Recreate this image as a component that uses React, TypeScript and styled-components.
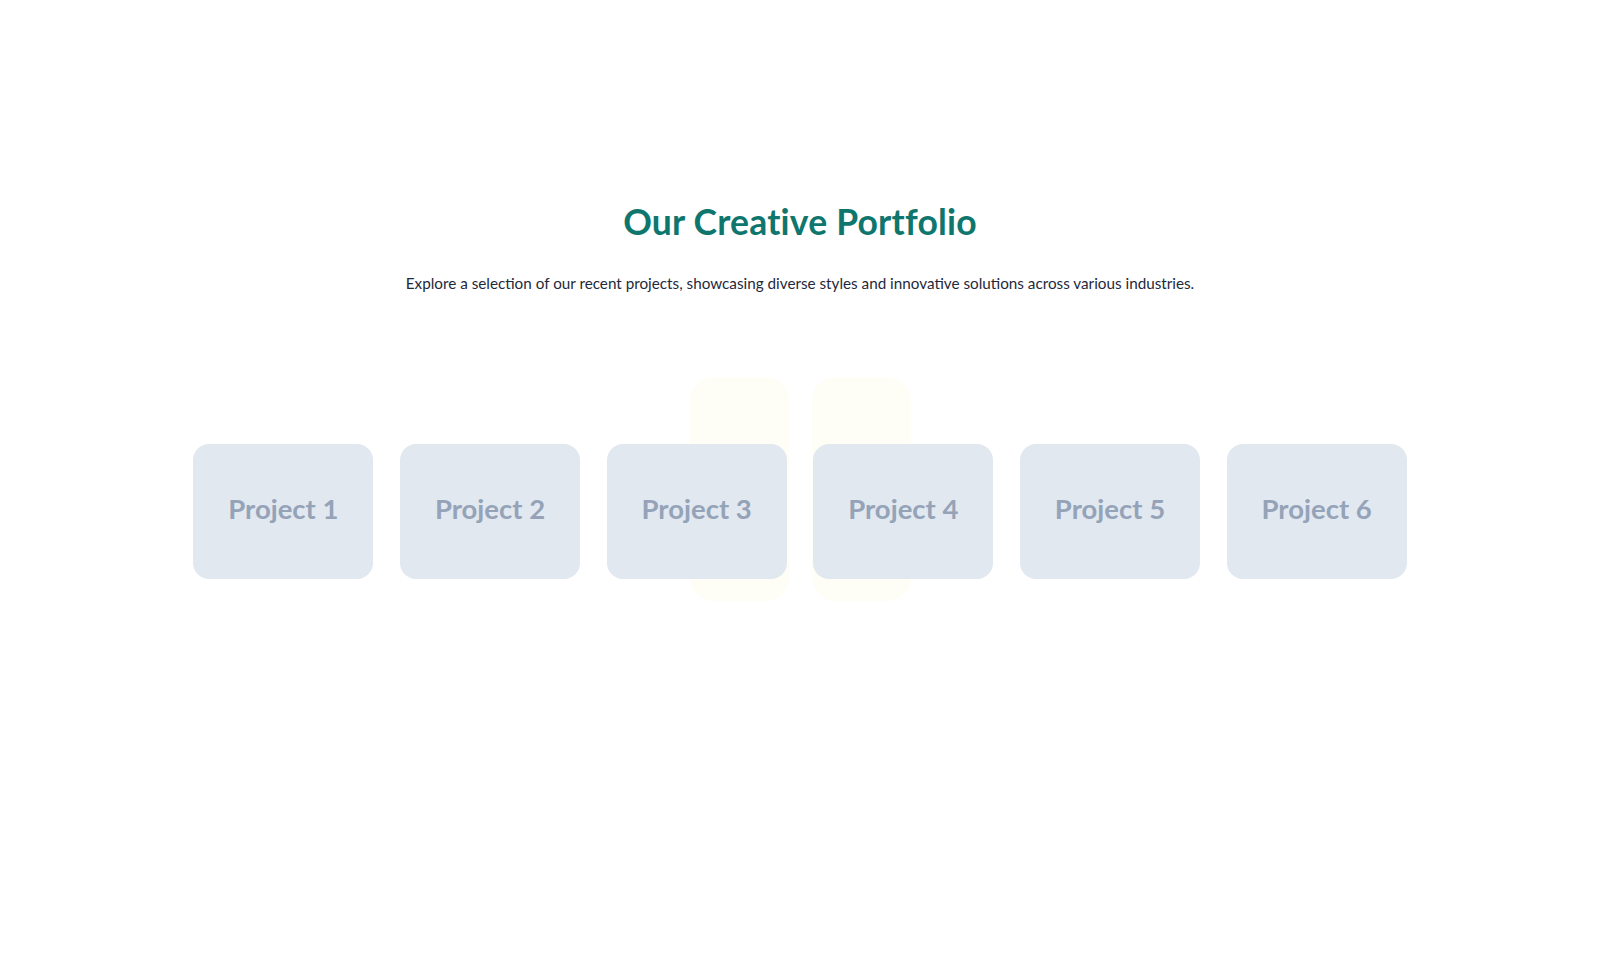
import React from 'react';
import styled, { createGlobalStyle } from 'styled-components';

// ------------------------------------------------------------------------------------------------

const GlobalStyle = createGlobalStyle`
  html, body {
    margin: 0;
    padding: 0;
    background: #ffffff;
  }
  body {
    font-family: Lato, 'Noto Sans', sans-serif;
    -webkit-font-smoothing: antialiased;
  }
`;

const projects = ['Project 1', 'Project 2', 'Project 3', 'Project 4', 'Project 5', 'Project 6'];

// offsets of the soft glow panels, relative to the gallery centre
const glows = [-110.5, 11.5];

export default function App() {
  return (
    <>
      <GlobalStyle />
      <Page>
        <Header>
          <Title>Our Creative Portfolio</Title>
          <Subtitle>
            Explore a selection of our recent projects, showcasing diverse styles and innovative solutions across
            various industries.
          </Subtitle>
        </Header>

        <Gallery>
          {glows.map((offset, i) => (
            <Glow key={i} style={{ left: `calc(50% + ${offset}px)` }} />
          ))}
          <CardRow>
            {projects.map(name => (
              <Card key={name}>
                <CardLabel>{name}</CardLabel>
              </Card>
            ))}
          </CardRow>
        </Gallery>
      </Page>
    </>
  );
}

// ------------------------------------------------------------------------------------------------

const Page = styled.main`
  width: 100%;
  min-height: 100vh;
  box-sizing: border-box;
  padding-top: 200px;
  display: flex;
  flex-direction: column;
  align-items: center;
`;

const Header = styled.header`
  display: flex;
  flex-direction: column;
  align-items: center;
  text-align: center;
`;

const Title = styled.h2`
  margin: 0;
  font-family: Lato, 'Noto Sans', sans-serif;
  font-weight: 700;
  font-size: 35.5px;
  line-height: 44px;
  color: #0f766e;
  letter-spacing: 0.2px;
`;

const Subtitle = styled.p`
  margin: 27px 0 0;
  font-family: Lato, 'Noto Sans', sans-serif;
  font-weight: 400;
  font-size: 15.25px;
  line-height: 24px;
  color: #1e293b;
`;

const Gallery = styled.section`
  position: relative;
  margin-top: 82px;
  width: 100%;
  height: 224px;
  display: flex;
  justify-content: center;
`;

const Glow = styled.div`
  position: absolute;
  top: 0;
  width: 99px;
  height: 224px;
  border-radius: 24px;
  background: #fefdf6;
  z-index: 0;
`;

const CardRow = styled.div`
  position: relative;
  z-index: 1;
  margin-top: 67px;
  display: flex;
  gap: 26.67px;
  align-items: flex-start;
`;

const Card = styled.div`
  width: 180px;
  height: 135px;
  box-sizing: border-box;
  padding-bottom: 6px;
  border-radius: 16px;
  background: #e2e8f0;
  display: flex;
  align-items: center;
  justify-content: center;
`;

const CardLabel = styled.span`
  font-family: Lato, 'Noto Sans', sans-serif;
  font-weight: 700;
  font-size: 27.5px;
  color: #94a3b8;
`;
